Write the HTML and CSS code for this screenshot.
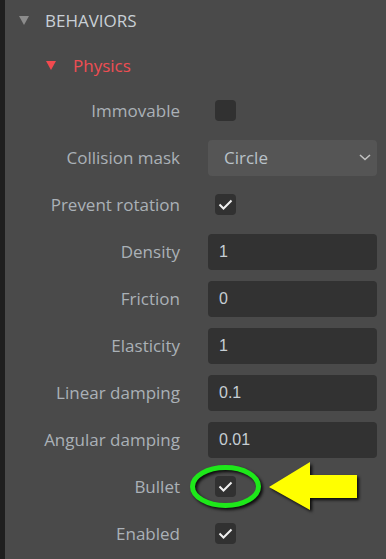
FILE: index.html
```html
<!DOCTYPE html>
<html lang="en">
<head>
  <meta charset="UTF-8">
  <meta name="viewport" content="width=device-width, initial-scale=1.0">
  <title>Behaviors - Physics</title>
  <link rel="stylesheet" href="styles.css">
</head>
<body>
  <div class="panel">
    <div class="section-head">
      <span class="caret"></span>
      <span>BEHAVIORS</span>
    </div>

    <div class="behavior-head">
      <span class="caret red"></span>
      <span>Physics</span>
    </div>

    <div class="props">
      <div class="row">
        <label>Immovable</label>
        <div class="control"><span class="check"></span></div>
      </div>
      <div class="row">
        <label>Collision mask</label>
        <div class="control">
          <div class="select">
            <span>Circle</span>
            <svg class="chevron" width="12" height="7" viewBox="0 0 12 7"><path d="M1 1 L6 5.5 L11 1" fill="none" stroke="#c2c2c2" stroke-width="1.6"/></svg>
          </div>
        </div>
      </div>
      <div class="row">
        <label>Prevent rotation</label>
        <div class="control"><span class="check on"><svg width="21" height="21" viewBox="0 0 21 21"><path d="M4.5 10.5 L8.5 14.5 L16.5 6.5" fill="none" stroke="#f0f0f0" stroke-width="2"/></svg></span></div>
      </div>
      <div class="row">
        <label>Density</label>
        <div class="control"><div class="field">1</div></div>
      </div>
      <div class="row">
        <label>Friction</label>
        <div class="control"><div class="field">0</div></div>
      </div>
      <div class="row">
        <label>Elasticity</label>
        <div class="control"><div class="field">1</div></div>
      </div>
      <div class="row">
        <label>Linear damping</label>
        <div class="control"><div class="field">0.1</div></div>
      </div>
      <div class="row">
        <label>Angular damping</label>
        <div class="control"><div class="field">0.01</div></div>
      </div>
      <div class="row">
        <label>Bullet</label>
        <div class="control"><span class="check on"><svg width="21" height="21" viewBox="0 0 21 21"><path d="M4.5 10.5 L8.5 14.5 L16.5 6.5" fill="none" stroke="#f0f0f0" stroke-width="2"/></svg></span></div>
      </div>
      <div class="row">
        <label>Enabled</label>
        <div class="control"><span class="check on"><svg width="21" height="21" viewBox="0 0 21 21"><path d="M4.5 10.5 L8.5 14.5 L16.5 6.5" fill="none" stroke="#f0f0f0" stroke-width="2"/></svg></span></div>
      </div>
    </div>
  </div>

  <!-- annotation drawn over the screenshot -->
  <svg class="annot" width="386" height="559" viewBox="0 0 386 559">
    <ellipse cx="225.5" cy="486.5" rx="33" ry="19" fill="none" stroke="#1ee81a" stroke-width="5"/>
    <polygon points="269,487 310,462 310,475 357,475 357,498 310,498 310,510" fill="#ffff00"/>
  </svg>
</body>
</html>
```

FILE: styles.css
```css
body {
  margin: 0;
  padding: 0;
  background-color: #1f1f1f;
  font-family: "Open Sans", "Noto Sans", sans-serif;
  overflow: hidden;
}

.panel {
  margin-left: 5px;
  height: 559px;
  background-color: #4a4a4a;
}

.section-head {
  display: flex;
  align-items: center;
  gap: 16px;
  height: 41px;
  padding-left: 14px;
  color: #c9d0d6;
  font-size: 17px;
  box-sizing: border-box;
  padding-bottom: 1px;
}

.behavior-head {
  display: flex;
  align-items: center;
  gap: 17px;
  height: 46px;
  padding-left: 41px;
  color: #ef4e53;
  font-size: 17px;
  box-sizing: border-box;
  padding-top: 2px;
}

.caret {
  width: 0;
  height: 0;
  border-left: 5px solid transparent;
  border-right: 5px solid transparent;
  border-top: 9px solid #8c8c8c;
}

.caret.red {
  border-top-color: #f24a4f;
}

.props {
  display: flex;
  flex-direction: column;
}

.row {
  display: grid;
  grid-template-columns: 175px 1fr;
  column-gap: 28px;
  align-items: center;
  height: 47px;
  padding-right: 9px;
}

.row label {
  text-align: right;
  color: #aab1b7;
  font-size: 17px;
}

.control {
  display: flex;
  align-items: center;
}

.check {
  display: block;
  width: 21px;
  height: 21px;
  margin-left: 7px;
  border-radius: 4px;
  background-color: #313131;
}

.check svg {
  display: block;
}

.select {
  display: flex;
  align-items: center;
  justify-content: space-between;
  width: 100%;
  height: 36px;
  padding: 0 6px 0 16px;
  box-sizing: border-box;
  border-radius: 4px;
  background-color: #555555;
  color: #b9c2c9;
  font-size: 17px;
}

.field {
  display: flex;
  align-items: center;
  width: 100%;
  height: 36px;
  padding-left: 11px;
  box-sizing: border-box;
  border-radius: 4px;
  background-color: #323232;
  color: #c6ced4;
  font-family: "Liberation Sans", Arial, sans-serif;
  font-size: 16px;
}

.annot {
  position: absolute;
  top: 0;
  left: 0;
  pointer-events: none;
  filter: drop-shadow(2px 2px 1.5px rgba(0, 0, 0, 0.85));
}
```
